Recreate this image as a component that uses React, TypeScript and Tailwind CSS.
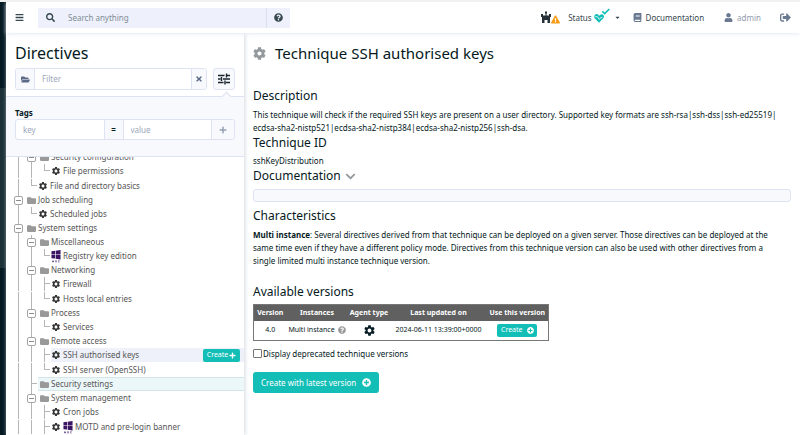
import React from "react";
import {
  FaBars, FaSearch, FaQuestionCircle, FaBook, FaUser, FaSignOutAlt, FaFolderOpen, FaTimes,
  FaPlus, FaFolder, FaCog, FaPlusCircle, FaChevronDown, FaCaretDown, FaExclamationTriangle,
} from "react-icons/fa";
import { MdSettings } from "react-icons/md";

type Guide = "line" | "tee" | "elbow" | "toggle";
type Row = {
  label: string;
  guides: Guide[];
  kind: "folder" | "leaf" | "dsc" | "both";
  state?: "hover" | "selected";
  gap?: boolean;
};

const rows: Row[] = [
  { label: "Security configuration", guides: ["line", "toggle"], kind: "folder" },
  { label: "File permissions", guides: ["line", "line", "elbow"], kind: "leaf" },
  { label: "File and directory basics", guides: ["line", "elbow"], kind: "leaf", gap: true },
  { label: "Job scheduling", guides: ["toggle"], kind: "folder" },
  { label: "Scheduled jobs", guides: ["line", "elbow"], kind: "leaf" },
  { label: "System settings", guides: ["toggle"], kind: "folder" },
  { label: "Miscellaneous", guides: ["line", "toggle"], kind: "folder" },
  { label: "Registry key edition", guides: ["line", "line", "elbow"], kind: "dsc" },
  { label: "Networking", guides: ["line", "toggle"], kind: "folder" },
  { label: "Firewall", guides: ["line", "line", "tee"], kind: "leaf" },
  { label: "Hosts local entries", guides: ["line", "line", "elbow"], kind: "leaf", gap: true },
  { label: "Process", guides: ["line", "toggle"], kind: "folder" },
  { label: "Services", guides: ["line", "line", "elbow"], kind: "leaf" },
  { label: "Remote access", guides: ["line", "toggle"], kind: "folder" },
  { label: "SSH authorised keys", guides: ["line", "line", "tee"], kind: "leaf", state: "hover" },
  { label: "SSH server (OpenSSH)", guides: ["line", "line", "elbow"], kind: "leaf", gap: true },
  { label: "Security settings", guides: ["line", "tee"], kind: "folder", state: "selected" },
  { label: "System management", guides: ["line", "toggle"], kind: "folder" },
  { label: "Cron jobs", guides: ["line", "line", "tee"], kind: "leaf" },
  { label: "MOTD and pre-login banner", guides: ["line", "line", "tee"], kind: "both", gap: true },
];

function GuideCell({ type }: { type: Guide }) {
  if (type === "toggle") {
    return (
      <span className="flex w-[13px] shrink-0 flex-col items-center self-stretch">
        <span className="w-px grow bg-[#b5b5b5]" />
        <button aria-label="Collapse" className="flex size-[9px] shrink-0 items-center justify-center rounded-[2px] border border-[#a5a5a5] bg-white">
          <span className="h-px w-[5px] bg-[#8c8c8c]" />
        </button>
        <span className="w-px grow bg-[#b5b5b5]" />
      </span>
    );
  }
  return (
    <span className="flex w-[13px] shrink-0 self-stretch pl-[6px]">
      {type === "line" && <span className="w-px bg-[#b5b5b5]" />}
      {type === "elbow" && <span className="h-1/2 w-[6px] border-b border-l border-[#b5b5b5]" />}
      {type === "tee" && (
        <>
          <span className="w-px bg-[#b5b5b5]" />
          <span className="h-1/2 w-[5px] border-b border-[#b5b5b5]" />
        </>
      )}
    </span>
  );
}

function DscIcon() {
  return (
    <svg viewBox="0 0 30 40" className="h-[13px] w-[10px] shrink-0" fill="#3c1464" aria-hidden="true">
      <path d="M1 4l11-1.500v11H1zM14 2.200 29 0v13.500H14zM1 15.500h11v11L1 25zM14 15.500h15V29l-15-2.200z" />
      <path d="M3 32h4l2 2v2l-2 2H3zM12 32h6v1.500h-4v1h4V38h-6v-1.500h4v-1h-4zM21 32h6v1.500h-4v3h4V38h-6z" opacity=".7" />
    </svg>
  );
}

function TreeRow({ row }: { row: Row }) {
  const folder = row.kind === "folder";
  const look =
    row.state === "hover"
      ? "bg-[#eef1fa]"
      : row.state === "selected"
        ? "border-y border-[#d3e6e9] bg-[#ecf7f9]"
        : "";
  return (
    <li className={`flex h-[14px] items-center ${row.gap ? "mt-px" : ""}`}>
      {row.guides.map((g, i) => (
        <GuideCell key={i} type={g} />
      ))}
      <div className={`flex min-w-0 grow items-center gap-[2px] self-stretch ${folder ? "pl-[2px]" : ""} ${look}`}>
        {folder && <FaFolder className="size-[9px] shrink-0 text-[#999999]" />}
        {(row.kind === "leaf" || row.kind === "both") && <MdSettings className="size-[10px] shrink-0 text-[#333333]" />}
        {(row.kind === "dsc" || row.kind === "both") && <DscIcon />}
        <a href="#" className="grow whitespace-nowrap text-[8px] leading-[14px] text-[#555555]">{row.label}</a>
        {row.state === "hover" && (
          <button className="mr-1 flex h-[13px] w-[37px] shrink-0 items-center justify-center gap-px rounded-[2px] bg-[#13beb7] text-[7px] leading-[12px] text-white">
            Create <FaPlus className="size-[7px]" />
          </button>
        )}
      </div>
    </li>
  );
}

function Header() {
  return (
    <header className="relative z-20 flex h-[31px] shrink-0 items-center bg-white text-[8px] text-[#36474f] shadow-[0_1px_4px_#e3e8f5]">
      <button aria-label="Menu" className="ml-[9px]"><FaBars className="size-[9px]" /></button>
      <div className="ml-[14px] flex h-5 w-[252px] items-center bg-[#eef1fb]">
        <FaSearch className="ml-[8px] size-[9px] shrink-0" />
        <input aria-label="Search anything" placeholder="Search anything" className="ml-[13px] min-w-0 grow bg-transparent outline-none placeholder:text-[#818c97]" />
        <button aria-label="Search help" className="flex h-full w-6 items-center justify-center border-l border-[#d9dfef]">
          <FaQuestionCircle className="size-[9px]" />
        </button>
      </div>
      <nav className="ml-auto flex items-center pr-[9px]">
        <button aria-label="Plugins" className="mr-2 flex items-end">
          <svg viewBox="0 0 24 26" className="h-[13px] w-3" fill="#263238" aria-hidden="true">
            <path d="M10 1h4v4h-1v4h5V6h4v6h-2v12h-5v-6H9v6H4V12H2V6h4v3h5V5h-1z" />
          </svg>
          <FaExclamationTriangle className="-ml-px size-[9px] text-[#f59b16]" />
        </button>
        <button className="flex items-center">
          Status
          <svg viewBox="0 0 48 45" className="mb-1 ml-[2px] h-[15px] w-4" fill="none" aria-hidden="true">
            <path d="M15 44 2 31C-2 24 4 16 11 19l5 4 5-4c7-2 12 6 7 12z" fill="#13beb7" />
            <path d="M4 26h6l6 8 4-5h5" stroke="#fff" strokeWidth="2.500" />
            <path d="m25 10 7 7L46 3" stroke="#13beb7" strokeWidth="5" />
          </svg>
          <FaCaretDown className="ml-1 size-[7px]" />
        </button>
        <a href="#" className="ml-3 flex items-center gap-1"><FaBook className="size-[9px] text-[#6b7a92]" />Documentation</a>
        <a href="#" className="ml-5 flex items-center gap-1 text-[#919bad]"><FaUser className="size-[9px] text-[#6b7a92]" />admin</a>
        <button aria-label="Log out" className="ml-[19px]"><FaSignOutAlt className="size-[11px] text-[#6b7a92]" /></button>
      </nav>
    </header>
  );
}

function Sidebar() {
  return (
    <aside className="z-10 flex w-[238px] shrink-0 flex-col bg-white shadow-[1px_0_4px_#d5d8e0]">
      <div className="px-[9px] pt-2">
        <h1 className="text-[16px] leading-6">Directives</h1>
        <div className="mt-[3px] flex gap-[6px]">
          <div className="flex h-[22px] min-w-0 grow overflow-hidden rounded-[3px] border border-[#dde3f3] bg-white text-[8px]">
            <button aria-label="Toggle folders" className="flex w-[19px] shrink-0 items-center justify-center border-r border-[#dde3f3] bg-[#f8f9fd]"><FaFolderOpen className="size-[9px] text-[#5b6b87]" /></button>
            <input aria-label="Filter" placeholder="Filter" className="min-w-0 grow px-[7px] outline-none placeholder:text-[#9ba6b9]" />
            <button aria-label="Clear" className="flex w-[15px] shrink-0 items-center justify-center border-l border-[#dde3f3] bg-[#f8f9fd]"><FaTimes className="size-[8px] text-[#5b6b87]" /></button>
          </div>
          <button aria-label="Filters" className="flex h-[22px] w-[22px] shrink-0 items-center justify-center rounded-[3px] border border-[#dde3f3] bg-[#f8f9fd]">
            <svg viewBox="0 0 24 24" className="size-3" stroke="#17242e" strokeWidth="2.800" aria-hidden="true">
              <path d="M0 5h13M17 5h7M17 1v8M0 12h5M10 12h14M7 8v8M0 19h11M16 19h8M14 15v8" />
            </svg>
          </button>
        </div>
      </div>
      <div className="relative mt-[6px] h-[61px] shrink-0 border-y border-[#dde3f3] bg-[#f8f9fd] px-[9px] pt-[9px]">
        <span className="absolute -top-[4px] right-[14px] size-[7px] rotate-45 border-l border-t border-[#dde3f3] bg-[#f8f9fd]" />
        <label htmlFor="tag-key" className="block text-[8px] font-bold leading-[13px]">Tags</label>
        <div className="flex h-[21px] overflow-hidden rounded-[3px] border border-[#dde3f3] bg-white text-[8px]">
          <input id="tag-key" placeholder="key" className="w-0 grow px-[7px] outline-none placeholder:text-[#9ba6b9]" />
          <span className="flex w-5 shrink-0 items-center justify-center border-x border-[#dde3f3] bg-[#f8f9fd] font-bold">=</span>
          <input aria-label="Tag value" placeholder="value" className="w-0 grow px-[7px] outline-none placeholder:text-[#9ba6b9]" />
          <button aria-label="Add tag" className="flex w-[23px] shrink-0 items-center justify-center border-l border-[#dde3f3] bg-[#f8f9fd]"><FaPlus className="size-[8px] text-[#94a0b5]" /></button>
        </div>
      </div>
      <div className="min-h-0 grow overflow-hidden">
        <ul className="-mt-[7px] pl-[6px]">
          {rows.map((r) => <TreeRow key={r.label} row={r} />)}
        </ul>
      </div>
    </aside>
  );
}

function Details() {
  return (
    <main className="min-w-0 grow bg-white px-[9px] pt-2">
      <h1 className="flex items-center gap-[9px] text-[15px] leading-6"><FaCog className="size-[13px] text-[#94999d]" />Technique SSH authorised keys</h1>
      <h2 className="mt-[22px] text-[12px] leading-[18px]">Description</h2>
      <p className="mt-[3px] pr-1 text-[8px] leading-[13px]">This technique will check if the required SSH keys are present on a user directory. Supported key formats are <span className="whitespace-nowrap">ssh-rsa|ssh-dss|ssh-ed25519|</span><wbr /><span className="whitespace-nowrap">ecdsa-sha2-nistp521|ecdsa-sha2-nistp384|ecdsa-sha2-nistp256|ssh-dsa.</span></p>
      <h2 className="text-[12px] leading-[18px]">Technique ID</h2>
      <p className="mt-[2px] text-[8px] leading-[13px]">sshKeyDistribution</p>
      <h2 className="flex items-center gap-1 text-[12px] leading-[18px]">Documentation <FaChevronDown className="size-[11px] text-[#94999d]" /></h2>
      <div className="mt-1 h-[13px] rounded-[3px] border border-[#dde3f3] bg-[#f8f9fd]" />
      <h2 className="mt-[5px] text-[12px] leading-[18px]">Characteristics</h2>
      <p className="mt-[3px] pr-1 text-[8px] leading-[13px]"><b>Multi instance</b>: Several directives derived from that technique can be deployed on a given server. Those directives can be deployed at the same time even if they have a different policy mode. Directives from this technique version can also be used with other directives from a single limited multi instance technique version.</p>
      <h2 className="mt-4 text-[12px] leading-[18px]">Available versions</h2>
      <table className="mt-[3px] w-[296px] table-fixed border-collapse border border-[#777777] text-center text-[7px] leading-3">
        <thead className="bg-[#606060] text-white">
          <tr className="h-4 whitespace-nowrap">
            <th className="w-[33px]">Version</th>
            <th className="w-[61px]">Instances</th>
            <th className="w-[43px]">Agent type</th>
            <th>Last updated on</th>
            <th className="w-[62px]">Use this version</th>
          </tr>
        </thead>
        <tbody>
          <tr className="h-5 whitespace-nowrap">
            <td>4.0</td>
            <td><span className="flex items-center justify-center gap-[3px]">Multi instance <FaQuestionCircle className="size-[8px] shrink-0 text-[#999999]" /></span></td>
            <td><MdSettings className="mx-auto size-[13px]" /></td>
            <td>2024-06-11 13:39:00+0000</td>
            <td><button className="mx-auto flex h-[13px] w-10 items-center justify-center gap-1 rounded-[2px] bg-[#13beb7] text-white">Create <FaPlusCircle className="size-[7px]" /></button></td>
          </tr>
        </tbody>
      </table>
      <label className="mt-[6px] flex items-center gap-px text-[8px] leading-[13px]">
        <input type="checkbox" className="size-[9px] appearance-none rounded-[1px] border border-[#767676] bg-white" />
        Display deprecated technique versions
      </label>
      <button className="mt-3 flex h-[21px] items-center gap-[6px] rounded-[3px] bg-[#13beb7] px-2 text-[8px] text-white">Create with latest version <FaPlusCircle className="size-[9px]" /></button>
    </main>
  );
}

export default function App() {
  return (
    <div className="flex h-screen flex-col overflow-hidden border-t-2 border-[#f1f1f1] bg-white font-['Noto_Sans',sans-serif] text-[#041922]">
      <div className="flex min-h-0 grow">
        <div className="flex w-[6px] shrink-0 flex-col bg-[#041922] pt-[86px]">
          <div className="h-[180px] bg-[#1c3038]" />
        </div>
        <div className="flex min-w-0 grow flex-col">
          <Header />
          <div className="flex min-h-0 grow">
            <Sidebar />
            <Details />
          </div>
        </div>
      </div>
    </div>
  );
}
